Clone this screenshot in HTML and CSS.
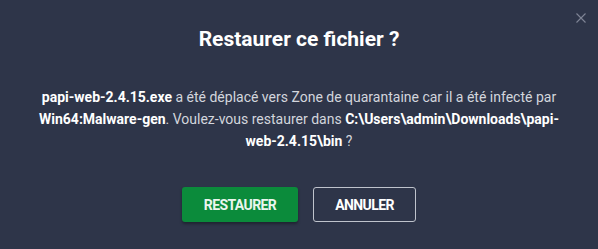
FILE: index.html
```html
<!DOCTYPE html>
<html lang="fr">
<head>
<meta charset="utf-8">
<link rel="stylesheet" href="styles.css">
</head>
<body>
<div class="dialog">
  <button class="close" aria-label="Fermer">
    <svg width="10" height="10" viewBox="0 0 10 10"><path d="M0.5 0.5 L9.5 9.5 M9.5 0.5 L0.5 9.5" stroke="#7f8596" stroke-width="1.1" fill="none"/></svg>
  </button>
  <h1 class="title">Restaurer ce fichier ?</h1>
  <p class="message"><b>papi-web-2.4.15.exe</b> a été déplacé vers Zone de quarantaine car il a été infecté par <b>Win64:Malware-gen</b>. Voulez-vous restaurer dans <b>C:\Users\admin\Downloads\papi-web-2.4.15\bin</b> ?</p>
  <div class="actions">
    <button class="btn btn-primary">RESTAURER</button>
    <button class="btn btn-secondary">ANNULER</button>
  </div>
</div>
</body>
</html>
```
FILE: styles.css
```css
html, body {
  margin: 0;
  padding: 0;
}
body {
  background: #2e3549;
  font-family: "Roboto", "Open Sans", sans-serif;
  color: #ffffff;
  width: 598px;
  height: 249px;
  overflow: hidden;
}
.dialog {
  position: relative;
  height: 249px;
  display: flex;
  flex-direction: column;
  align-items: center;
  padding-top: 27px;
  box-sizing: border-box;
}
.close {
  position: absolute;
  top: 13px;
  right: 12px;
  background: none;
  border: 0;
  padding: 0;
  width: 10px;
  height: 10px;
  display: flex;
}
.title {
  margin: 0;
  font-size: 21px;
  line-height: 25px;
  font-weight: 700;
  color: #ffffff;
}
.message {
  margin: 34px 0 0;
  width: 526px;
  text-align: center;
  font-size: 14px;
  line-height: 22px;
  color: #d3d6dd;
}
.message b {
  color: #ffffff;
  font-weight: 700;
}
.actions {
  display: flex;
  gap: 15px;
  margin-top: 35px;
}
.btn {
  height: 35px;
  border-radius: 3px;
  font-family: inherit;
  font-size: 14px;
  letter-spacing: -0.6px;
  font-weight: 700;
  color: #ffffff;
  cursor: pointer;
}
.btn-primary {
  width: 116px;
  background: #0b8b3b;
  border: 0;
  color: #eaf6ee;
  box-shadow: 0 2px 3px rgba(0,0,0,0.35);
}
.btn-secondary {
  width: 103px;
  background: transparent;
  border: 1px solid #bfc3cc;
}
```
